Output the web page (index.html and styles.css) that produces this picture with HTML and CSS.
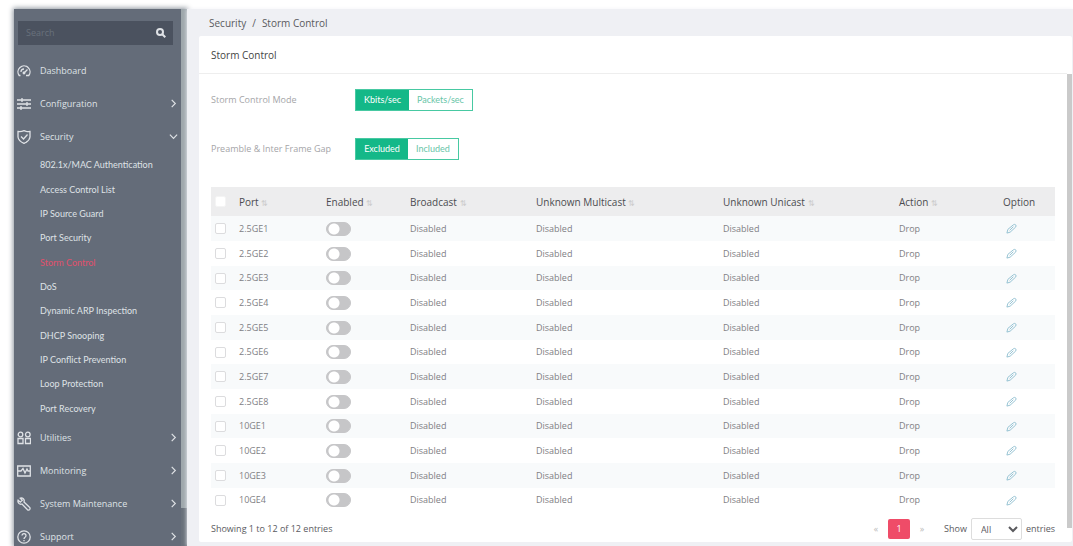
FILE: index.html
```html
<!DOCTYPE html>
<html lang="en">
<head>
<meta charset="utf-8">
<title>Storm Control</title>
<link rel="stylesheet" href="styles.css">
</head>
<body>
<div class="app">
  <aside class="sidebar">
    <div class="menu">
      <form class="search">
        <input type="text" placeholder="Search" aria-label="Search menu">
        <button type="button" aria-label="Search"><svg viewBox="0 0 12 12"><circle cx="5" cy="5" r="3"/><path d="M7.3 7.3l3 3"/></svg></button>
      </form>
      <nav>
        <a class="item" href="#"><svg class="icon" viewBox="0 0 14 14"><path d="M3.500 11.500H2.200A6 6 0 1 1 11.800 11.500H9M4 8a3 3 0 0 1 3-3M7.500 8.500l3-3"/><circle cx="7" cy="9" r=".8"/></svg><span>Dashboard</span></a>
        <a class="item" href="#"><svg class="icon" viewBox="0 0 14 14"><path d="M0 3h14M0 7h14M0 11h14M5 1v4M10 5v4M4 9v4"/></svg><span>Configuration</span><svg class="arrow" viewBox="0 0 10 10"><path d="M3 1l4 4-4 4"/></svg></a>
        <a class="item" href="#"><svg class="icon" viewBox="0 0 14 14"><path d="M1 1.500Q4 2 7 .7 10 2 13 1.500V7Q12.500 11 7 13.400 1.500 11 1 7zM4 6.500l2.500 2.500L10.500 4.500"/></svg><span>Security</span><svg class="arrow" viewBox="0 0 10 10"><path d="M1 3l4 4 4-4"/></svg></a>
        <div class="submenu">
          <a href="#">802.1x/MAC Authentication</a>
          <a href="#">Access Control List</a>
          <a href="#">IP Source Guard</a>
          <a href="#">Port Security</a>
          <a href="#" class="current" aria-current="page">Storm Control</a>
          <a href="#">DoS</a>
          <a href="#">Dynamic ARP Inspection</a>
          <a href="#">DHCP Snooping</a>
          <a href="#">IP Conflict Prevention</a>
          <a href="#">Loop Protection</a>
          <a href="#">Port Recovery</a>
        </div>
        <a class="item" href="#"><svg class="icon" viewBox="0 0 14 14"><path d="M1 7.500h5v5H1zM8.500 7.500h5v5h-5z"/><circle cx="3.500" cy="3.500" r="2.300"/><circle cx="10.800" cy="3.500" r="2.300"/></svg><span>Utilities</span><svg class="arrow" viewBox="0 0 10 10"><path d="M3 1l4 4-4 4"/></svg></a>
        <a class="item" href="#"><svg class="icon" viewBox="0 0 14 14"><path d="M.7 2h12.600v10H.7zM.7 7H4l2-2.500 2 4.500 2-4 1 2h2.300"/></svg><span>Monitoring</span><svg class="arrow" viewBox="0 0 10 10"><path d="M3 1l4 4-4 4"/></svg></a>
        <a class="item" href="#"><svg class="icon" viewBox="0 0 14 14"><path d="M3.300 1.200l2 2-2 2-2.200-2C.3 5.500 2.500 8 5 7l5.500 5.800q1.500.7 2.300-.5.700-1.200-.3-2L7 5C8 2.500 5.500.3 3.300 1.200z"/></svg><span>System Maintenance</span><svg class="arrow" viewBox="0 0 10 10"><path d="M3 1l4 4-4 4"/></svg></a>
        <a class="item" href="#"><svg class="icon" viewBox="0 0 14 14"><circle cx="7" cy="7" r="6.200"/><path d="M5 5.500a2 2 0 1 1 3 1.800Q7 7.800 7 9M7 10v1.200"/></svg><span>Support</span><svg class="arrow" viewBox="0 0 10 10"><path d="M3 1l4 4-4 4"/></svg></a>
      </nav>
    </div>
    <div class="track"><div class="thumb"></div></div>
  </aside>

  <main class="content">
    <div class="breadcrumb"><a href="#">Security</a><span>/</span><span>Storm Control</span></div>
    <section class="panel">
      <h1>Storm Control</h1>
      <div class="scroller">
        <div class="body">
          <div class="setting"><span class="name" id="mode">Storm Control Mode</span><div class="toggle" role="group" aria-labelledby="mode"><button type="button" class="on">Kbits/sec</button><button type="button">Packets/sec</button></div></div>
          <div class="setting"><span class="name" id="gap">Preamble &amp; Inter Frame Gap</span><div class="toggle" role="group" aria-labelledby="gap"><button type="button" class="on">Excluded</button><button type="button">Included</button></div></div>
          <table>
            <colgroup><col class="c-check"><col class="c-port"><col class="c-enabled"><col class="c-broad"><col class="c-multi"><col class="c-uni"><col class="c-action"><col class="c-option"></colgroup>
            <thead><tr><th><input type="checkbox" aria-label="Select all ports"></th><th>Port <i>⇅</i></th><th>Enabled <i>⇅</i></th><th>Broadcast <i>⇅</i></th><th>Unknown Multicast <i>⇅</i></th><th>Unknown Unicast <i>⇅</i></th><th>Action <i>⇅</i></th><th>Option</th></tr></thead>
            <tbody id="ports"></tbody>
          </table>
          <div class="footer">
            <span class="count">Showing 1 to 12 of 12 entries</span>
            <div class="pager"><button type="button" aria-label="Previous page">«</button><button type="button" class="page" aria-current="page">1</button><button type="button" aria-label="Next page">»</button></div>
            <label class="show">Show <select><option>All</option></select> entries</label>
          </div>
        </div>
        <div class="bar"><div class="handle"></div></div>
      </div>
    </section>
  </main>
</div>
<script src="script.js"></script>
</body>
</html>
```
FILE: script.js
```js
const ports = [];
for (let i = 1; i <= 8; i++) ports.push('2.5GE' + i);
for (let i = 1; i <= 4; i++) ports.push('10GE' + i);

document.getElementById('ports').innerHTML = ports.map(port => `
  <tr>
    <td><input type="checkbox" aria-label="Select ${port}"></td>
    <td>${port}</td>
    <td><input type="checkbox" role="switch" class="switch" aria-label="Enable ${port}"></td>
    <td>Disabled</td>
    <td>Disabled</td>
    <td>Disabled</td>
    <td>Drop</td>
    <td><button type="button" class="edit" aria-label="Edit ${port}"><svg viewBox="0 0 12 12"><path d="M1 11l1-4 6-5q1.500-1 2.500 0t0 2.500L4.500 10zM4 8l4-4"/></svg></button></td>
  </tr>`).join('');
```
FILE: styles.css
```css
* { box-sizing: border-box; }
body {
  margin: 0;
  background: #fff;
  color: #5a5a5e;
  font: 10px/16px "Open Sans", "Noto Sans", sans-serif;
}
a { color: inherit; text-decoration: none; }
button, input, select { font: inherit; color: inherit; margin: 0; }
button { padding: 0; border: 0; background: none; }
svg { display: block; fill: none; stroke: currentColor; }

.app {
  display: flex;
  height: 100vh;
  padding: 9px 0 0 14px;
  overflow: hidden;
}

.sidebar {
  display: flex;
  flex: 0 0 173px;
  min-width: 0;
  background: #646c79;
  color: #dfe2e6;
  box-shadow: 0 0 5px 1px #8c949d;
}
.menu { flex: 1; min-width: 0; }
.search {
  display: flex;
  align-items: center;
  height: 24px;
  margin: 12px 8px 0 4px;
  padding: 0 6px 0 8px;
  background: #4b525f;
}
.search input {
  flex: 1;
  min-width: 0;
  padding: 0;
  border: 0;
  outline: 0;
  background: none;
  font-size: 9px;
}
.search input::placeholder { color: #69717c; opacity: 1; }
.search svg { width: 12px; height: 12px; stroke-width: 2; }
nav { padding-top: 9px; }
.item {
  display: flex;
  align-items: center;
  height: 33px;
  padding: 0 3px;
}
.icon { width: 14px; height: 14px; margin-right: 9px; stroke-width: 1.3; }
.arrow { width: 9px; height: 9px; margin-left: auto; stroke-width: 1.3; }
.submenu {
  display: grid;
  grid-auto-rows: 1fr;
  align-items: center;
  min-height: 268px;
  padding-left: 26px;
  font-family: Lato, "Open Sans", sans-serif;
  font-size: 9px;
  white-space: nowrap;
}
.item span { font-size: 9px; }
.current { color: #e0506c; }
.track { width: 6px; background: #69717b; }
.thumb { height: 93%; background: #9ea7ac; }

.content {
  position: relative;
  display: flex;
  flex: 1;
  flex-direction: column;
  min-width: 0;
  padding: 0 1px 4px 12px;
  background: #eff0f4;
  box-shadow: 0 0 4px #f3f3f7;
}
.breadcrumb {
  display: flex;
  gap: 6px;
  height: 27px;
  padding: 5px 10px 0;
  line-height: 18px;
}
.panel {
  display: flex;
  flex: 1;
  flex-direction: column;
  min-height: 0;
  background: #fff;
  border-radius: 2px;
}
h1 {
  margin: 0 5px 0 0;
  padding: 10px 12px 9px;
  border-bottom: 1px solid #eee;
  color: #444;
  font-size: 10px;
  font-weight: 400;
  line-height: 18px;
}
.scroller { display: flex; flex: 1; min-height: 0; }
.body { flex: 1; min-width: 0; padding: 15px 12px 0; }
.bar { width: 5px; }
.handle { height: 97%; background: #cacaca; }

.setting {
  display: flex;
  align-items: center;
  height: 22px;
  margin-bottom: 27px;
}
.name { width: 144px; color: #a5a5a8; font-size: 9px; }
.toggle { display: flex; height: 22px; border: 1px solid #48c9a2; }
.toggle button {
  padding: 0 8px;
  color: #68c5a8;
  font-family: Lato, "Open Sans", sans-serif;
  font-size: 9px;
}
.toggle .on { min-width: 52px; background: #14b888; color: #fff; }

table { width: 100%; border-collapse: collapse; table-layout: fixed; }
.c-check { width: 28px; }
.c-port { width: 87px; }
.c-enabled { width: 84px; }
.c-broad { width: 126px; }
.c-multi { width: 187px; }
.c-uni { width: 176px; }
.c-action { width: 104px; }
th, td { padding: 0; text-align: left; font-weight: 400; white-space: nowrap; }
thead tr { height: 29px; background: #ededee; }
th { color: #4c4c50; }
th i { color: #ccc; font-size: 8px; font-style: normal; line-height: 8px; }
tbody { color: #808084; font-size: 9px; }
tbody tr { height: 25px; }
tbody tr:nth-child(3n) { height: 24px; }
tbody tr:nth-child(odd) { background: #f8fafb; }
input[type="checkbox"] {
  display: block;
  appearance: none;
  width: 11px;
  height: 11px;
  margin-left: 4px;
  border: 1px solid #dcdcde;
  border-radius: 2px;
  background: #fff;
}
input[type="checkbox"].switch {
  width: 25px;
  height: 14px;
  margin: 0;
  border: 1px solid #c6c6c8;
  border-radius: 7px;
  background: radial-gradient(circle at 7px 6px, #fff 5px, #c6c6c8 6px);
}
thead input[type="checkbox"] { border-color: #f4f4f4; }
.edit { display: block; margin-left: 3px; color: #8ebed0; }
.edit svg { width: 11px; height: 11px; }

.footer {
  display: flex;
  align-items: center;
  padding: 6px 0 0;
  font-size: 9px;
}
.count { flex: 1; }
.pager { display: flex; gap: 1px; margin-right: 11px; }
.pager button { width: 22px; height: 20px; color: #bbb; }
.pager .page { border-radius: 2px; background: #ef4c68; color: #fff; }
.show { display: flex; align-items: center; gap: 4px; }
select {
  width: 51px;
  height: 22px;
  padding: 0 0 0 5px;
  border: 1px solid #ddd;
  border-radius: 2px;
  background: #fff;
}
```
